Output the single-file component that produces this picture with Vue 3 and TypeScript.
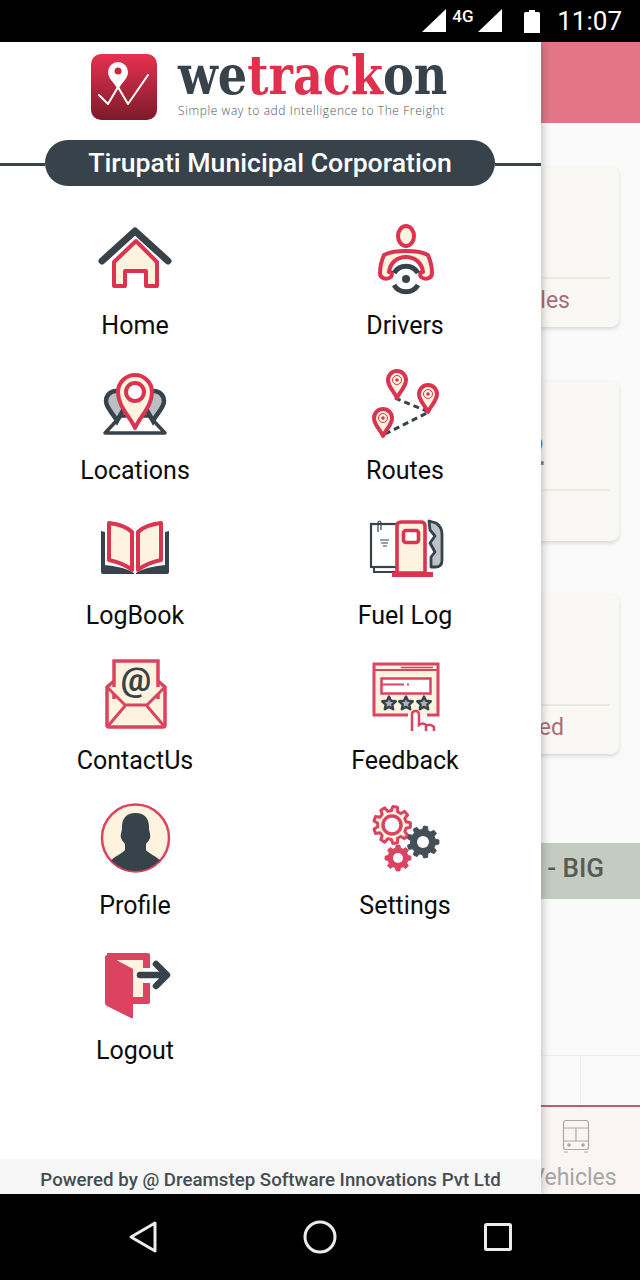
<script setup lang="ts">
const RED = '#da3450'
const ROSE = '#dc4360'
const DARK = '#37424a'
const CREAM = '#fdf3df'

// gear outline with evenly spaced trapezoid teeth
function gear(cx: number, cy: number, r: number, teeth: number): string {
  const root = r * 0.78
  const step = (Math.PI * 2) / teeth
  const pts: string[] = []
  for (let i = 0; i < teeth; i++) {
    const a = i * step
    const radii: [number, number][] = [
      [root, a - step * 0.32],
      [r, a - step * 0.18],
      [r, a + step * 0.18],
      [root, a + step * 0.32]
    ]
    for (const [rad, ang] of radii) {
      pts.push(`${(cx + rad * Math.cos(ang)).toFixed(1)} ${(cy + rad * Math.sin(ang)).toFixed(1)}`)
    }
  }
  return 'M' + pts.join('L') + 'Z'
}

const pin = 'M0 0C-3 -7 -9 -11 -9 -18A9 9 0 0 1 9 -18C9 -11 3 -7 0 0Z'
const routePins = [
  { x: 32, y: 33 },
  { x: 63, y: 47 },
  { x: 18, y: 71 }
]
</script>

<template>
  <div class="phone">
    <header class="status">
      <svg class="signal" width="24" height="23" viewBox="0 0 24 23"><path d="M24 0V23H0Z" fill="#fff" /></svg>
      <span class="net">4G</span>
      <svg class="signal" width="24" height="23" viewBox="0 0 24 23"><path d="M24 0V23H0Z" fill="#fff" /></svg>
      <svg class="battery" width="16" height="23" viewBox="0 0 16 23"><path d="M5 0H11V2H14.500Q16 2 16 3.500V23H0V3.500Q0 2 1.500 2H5Z" fill="#fff" /></svg>
      <span class="clock">11:07</span>
    </header>

    <div class="main">
      <div class="page">
        <div class="appbar"></div>
        <div class="cards">
          <div class="card">
            <div class="card-body"></div>
            <div class="card-foot">Vehicles</div>
          </div>
          <div class="card">
            <div class="card-body value">2</div>
            <div class="card-foot"></div>
          </div>
          <div class="card">
            <div class="card-body"></div>
            <div class="card-foot short">Stopped</div>
          </div>
        </div>
        <div class="band">- BIG</div>
        <div class="spacer"></div>
        <div class="strip"><i></i></div>
        <div class="tabs">
          <div class="tab">
            <svg width="28" height="34" viewBox="0 0 28 34" fill="none" stroke="#a8a8a8" stroke-width="1.200">
              <rect x="1.500" y="1.500" width="25" height="29" rx="2.500" />
              <path d="M1.500 9H26.500M14 9V22M1.500 22H26.500M2 33H6M22 33H26" />
              <circle cx="7" cy="26" r="1.200" fill="#a8a8a8" />
              <circle cx="21" cy="26" r="1.200" fill="#a8a8a8" />
            </svg>
            <span>Vehicles</span>
          </div>
        </div>
      </div>

      <aside class="drawer">
        <div class="brand">
          <svg class="brand-mark" width="66" height="66" viewBox="0 0 66 66">
            <defs>
              <linearGradient id="mark" x1="0" y1="0" x2="0" y2="1">
                <stop offset="0" stop-color="#e7314f" />
                <stop offset="1" stop-color="#7c1b2b" />
              </linearGradient>
            </defs>
            <rect width="66" height="66" rx="10" fill="url(#mark)" />
            <path d="M27 36C24 29 17 25 17 18A10 10 0 0 1 37 18C37 25 30 29 27 36Z" fill="#fff" />
            <circle cx="27" cy="17" r="3.500" fill="#c9283f" />
            <path d="M8 41L17 50L27 33L37 50L57 21" fill="none" stroke="#fff" stroke-width="2" stroke-linecap="round" stroke-linejoin="round" />
          </svg>
          <div class="wordmark">
            <div class="word">we<em>track</em>on</div>
            <div class="tagline">Simple way to add Intelligence to The Freight</div>
          </div>
        </div>

        <div class="org">
          <span class="rule left"></span>
          <div class="pill">Tirupati Municipal Corporation</div>
          <span class="rule"></span>
        </div>

        <nav class="menu">
          <div class="item">
            <svg width="80" height="80" viewBox="0 0 80 80">
              <path d="M41 21L19 42V66H30V51H51V66H62V42Z" :fill="CREAM" :stroke="RED" stroke-width="4" stroke-linejoin="round" />
              <path d="M7 41L40 11L73 41" fill="none" :stroke="DARK" stroke-width="7" stroke-linecap="round" stroke-linejoin="round" />
            </svg>
            <span>Home</span>
          </div>

          <div class="item">
            <svg width="80" height="80" viewBox="0 0 80 80">
              <ellipse cx="41" cy="16" rx="8" ry="10" :fill="CREAM" :stroke="RED" stroke-width="4" />
              <path d="M41 31C31 31 24 32 19 35C16 42 15 48 15 53C15 59 22 60 26 57C28 54 26 51 24 52C25 43 32 37 41 37C50 37 57 43 58 52C56 51 54 54 56 57C60 60 67 59 67 53C67 48 66 42 63 35C58 32 51 31 41 31Z" :fill="CREAM" :stroke="RED" stroke-width="4" stroke-linejoin="round" />
              <path d="M29 53A14 14 0 0 1 53 53M29 65A14 14 0 0 0 53 65" fill="none" :stroke="DARK" stroke-width="5" />
              <circle cx="41" cy="59" r="4" :fill="DARK" />
            </svg>
            <span>Drivers</span>
          </div>

          <div class="item">
            <svg width="80" height="80" viewBox="0 0 80 80">
              <path d="M26 51H54L70 68H10Z" fill="none" :stroke="DARK" stroke-width="3.500" stroke-linejoin="round" />
              <g :stroke="DARK" stroke-width="4.500" fill="#b8c0c4">
                <path d="M22 56C18 48 11 43 11 36A10 10 0 0 1 31 36C31 43 26 48 22 56Z" />
                <path d="M58 56C54 48 49 43 49 36A10 10 0 0 1 69 36C69 43 62 48 58 56Z" />
              </g>
              <path d="M40 63C35 51 23 42 23 27A17 17 0 0 1 57 27C57 42 45 51 40 63Z" :fill="CREAM" :stroke="RED" stroke-width="4" stroke-linejoin="round" />
              <circle cx="40" cy="27" r="9" fill="#fff" :stroke="RED" stroke-width="4" />
            </svg>
            <span>Locations</span>
          </div>

          <div class="item">
            <svg width="80" height="80" viewBox="0 0 80 80">
              <path d="M30 33L64 47L18 70" fill="none" :stroke="DARK" stroke-width="3" stroke-dasharray="6 4" />
              <g v-for="p in routePins" :key="p.x" :transform="`translate(${p.x} ${p.y})`">
                <path :d="pin" :fill="CREAM" :stroke="RED" stroke-width="4" stroke-linejoin="round" />
                <circle cy="-18" r="1.800" :fill="RED" />
                <circle cy="-18" r="4.500" fill="none" :stroke="RED" stroke-width="1" />
              </g>
            </svg>
            <span>Routes</span>
          </div>

          <div class="item">
            <svg width="80" height="80" viewBox="0 0 80 80">
              <path d="M6 21L10 22V55C20 56 31 58 39 63V64H8Q6 64 6 62Z" :fill="DARK" />
              <path d="M74 21L70 22V55C60 56 49 58 41 63V64H72Q74 64 74 62Z" :fill="DARK" />
              <path d="M14 13C23 14 32 17 37 22V60C31 55 23 52 14 50Z" :fill="CREAM" :stroke="RED" stroke-width="4" stroke-linejoin="round" />
              <path d="M66 13C57 14 48 17 43 22V60C49 55 57 52 66 50Z" :fill="CREAM" :stroke="RED" stroke-width="4" stroke-linejoin="round" />
            </svg>
            <span>LogBook</span>
          </div>

          <div class="item">
            <svg width="80" height="80" viewBox="0 0 80 80">
              <path d="M9 58V62H32" fill="none" :stroke="DARK" stroke-width="2" />
              <rect x="6" y="14" width="30" height="43" fill="#fff" :stroke="DARK" stroke-width="2.200" />
              <path d="M13 22V13Q13 11 14.500 11Q16 11 16 13V20" fill="none" :stroke="DARK" stroke-width="1.200" />
              <path d="M15 30H24M16 33H23M18 36H22" :stroke="DARK" stroke-width="1.200" />
              <path d="M64 11L71 13Q77 17 77 24V50Q77 57 71 57H66L66 47L70 42L65 33L70 26L65 20Z" fill="#bcc2c6" :stroke="DARK" stroke-width="2.800" stroke-linejoin="round" />
              <path d="M32 63V16Q32 12 36 12H56Q60 12 60 16V63Z" :fill="CREAM" :stroke="RED" stroke-width="3.600" />
              <rect x="38.500" y="20.500" width="15" height="12" rx="2.500" fill="#fff" :stroke="RED" stroke-width="3.600" />
              <rect x="27" y="62" width="41" height="5" :fill="RED" />
            </svg>
            <span>Fuel Log</span>
          </div>

          <div class="item">
            <svg width="80" height="80" viewBox="0 0 80 80">
              <path d="M19 26L12 32V70Q12 72 14 72H68Q70 72 70 70V32L63 26Z" :fill="CREAM" :stroke="ROSE" stroke-width="3.500" stroke-linejoin="round" />
              <path d="M19 44V6H63V44" :fill="CREAM" :stroke="ROSE" stroke-width="3.500" />
              <path d="M12 32L30 50H52L70 32M13 71L30 51M69 71L52 51" :fill="CREAM" :stroke="ROSE" stroke-width="3" stroke-linejoin="round" />
              <text class="at" x="41" y="36" text-anchor="middle" :fill="DARK">@</text>
            </svg>
            <span>ContactUs</span>
          </div>

          <div class="item">
            <svg width="80" height="80" viewBox="0 0 80 80">
              <path d="M43 60H9V9H73V60H62" :fill="CREAM" :stroke="ROSE" stroke-width="3" />
              <path d="M9 15H73" :stroke="ROSE" stroke-width="2" />
              <path d="M36 12.500H68" :stroke="ROSE" stroke-width="1.600" />
              <rect x="16.500" y="23.500" width="49" height="15" fill="#fff" :stroke="ROSE" stroke-width="2.500" />
              <path d="M17 29.500H39M42 29.500H44" :stroke="ROSE" stroke-width="2" />
              <g v-for="sx in [24, 41, 59]" :key="sx" :transform="`translate(${sx} 48)`">
                <path d="M0 -6.500L2 -2.200L6.800 -1.700L3.300 1.600L4.200 6.200L0 3.900L-4.200 6.200L-3.300 1.600L-6.800 -1.700L-2 -2.200Z" fill="#aab3ba" :stroke="DARK" stroke-width="2.400" stroke-linejoin="round" />
              </g>
              <path d="M47 76V60Q47 56 50.500 56Q54 56 54 60V70Q58 67 61 70V76M61 71Q65 68 69 72V76" fill="#fff" :stroke="ROSE" stroke-width="2.500" />
            </svg>
            <span>Feedback</span>
          </div>

          <div class="item">
            <svg width="80" height="80" viewBox="0 0 80 80">
              <defs>
                <clipPath id="face"><circle cx="40.500" cy="38" r="33" /></clipPath>
              </defs>
              <circle cx="40.500" cy="38" r="33.500" :fill="CREAM" :stroke="ROSE" stroke-width="2.500" />
              <path clip-path="url(#face)" d="M40.500 13C31 13 27 19 27 27C27 33 25 34 26 38C27 41 29 42 30 44V50C28 53 20 56 14 62V76H67V62C61 56 53 53 51 50V44C52 42 54 41 55 38C56 34 54 33 54 27C54 19 50 13 40.500 13Z" :fill="DARK" />
            </svg>
            <span>Profile</span>
          </div>

          <div class="item">
            <svg width="80" height="80" viewBox="0 0 80 80">
              <path :d="gear(27, 25, 18.500, 9)" :fill="CREAM" :stroke="ROSE" stroke-width="3" stroke-linejoin="round" />
              <circle cx="27" cy="25" r="9" fill="#fff" :stroke="ROSE" stroke-width="3.500" />
              <path :d="gear(58, 42, 16, 9)" fill="#454f57" stroke="#454f57" stroke-width="1" />
              <circle cx="58" cy="42" r="6" fill="#fff" />
              <path :d="gear(33, 58, 13, 8)" :fill="ROSE" :stroke="ROSE" stroke-width="1" />
              <circle cx="33" cy="58" r="5" fill="#fff" />
            </svg>
            <span>Settings</span>
          </div>

          <div class="item">
            <svg width="80" height="80" viewBox="0 0 80 80">
              <path d="M12 8H53Q55 8 55 10V23H48V15H22V52H48V38H55V57Q55 59 53 59H12Z" :fill="ROSE" />
              <rect x="22" y="15" width="26" height="37" :fill="CREAM" />
              <path d="M10 12Q10 10 12 10L38 24V72Q38 74 36 73L12 61Q10 60 10 58Z" :fill="ROSE" />
              <path d="M45 30H71M61 19L72 30L61 41" fill="none" :stroke="DARK" stroke-width="6.500" stroke-linecap="round" stroke-linejoin="round" />
            </svg>
            <span>Logout</span>
          </div>
        </nav>

        <footer class="powered">Powered by @ Dreamstep Software Innovations Pvt Ltd</footer>
      </aside>
    </div>

    <div class="navbar">
      <svg width="30" height="34" viewBox="0 0 30 34"><path d="M27 3L3 17L27 31Z" fill="none" stroke="#ececec" stroke-width="3" stroke-linejoin="round" /></svg>
      <svg width="34" height="34" viewBox="0 0 34 34"><circle cx="17" cy="17" r="15" fill="none" stroke="#ececec" stroke-width="3" /></svg>
      <svg width="30" height="30" viewBox="0 0 30 30"><rect x="2.500" y="2.500" width="25" height="25" rx="1" fill="none" stroke="#ececec" stroke-width="3" /></svg>
    </div>
  </div>
</template>

<style scoped>
.phone { width: 640px; height: 1280px; display: flex; flex-direction: column; overflow: hidden; font-family: Roboto, "Liberation Sans", sans-serif; background: #000; }

.status { height: 42px; display: flex; align-items: center; justify-content: flex-end; background: #000; color: #fff; padding-right: 18px; }
.signal { margin-top: -1px; }
.net { font-size: 17px; font-weight: 500; line-height: 20px; margin: -11px 3px 0 6px; width: 23px; }
.battery { margin-left: 22px; }
.clock { font-size: 26px; margin-left: 17px; }

.main { position: relative; flex: 1; min-height: 0; }

.page { height: 100%; display: flex; flex-direction: column; background: #fafafa; }
.appbar { height: 81px; background: #e27688; }
.cards { display: flex; flex-direction: column; gap: 53.500px; padding: 44px 21px 0 340px; }
.card { height: 160px; display: flex; flex-direction: column; background: #faf8f4; border-radius: 8px; box-shadow: 0 2px 4px rgba(0,0,0,.14); }
.card-body { height: 110px; border-bottom: 2px solid #ebe9e4; margin: 0 9px; }
.value { text-align: right; padding: 47px 65px 0 0; box-sizing: border-box; font-size: 40px; line-height: 48px; font-weight: 500; color: #5f8dac; }
.card-foot { flex: 1; text-align: right; padding: 8px 49px 0 0; font-size: 23px; line-height: 28px; color: #ab6c7a; }
.short { padding-right: 55px; }
.band { height: 56px; margin-top: 89px; background: #c3ccc0; color: #565b55; font-size: 26px; font-weight: 500; line-height: 50px; text-align: right; padding-right: 36px; }
.spacer { flex: 1; }
.strip { height: 50px; border-top: 1px solid #eee; box-sizing: border-box; }
.strip i { display: block; height: 100%; width: 1px; margin-left: 580px; background: #eee; }
.tabs { height: 89px; box-sizing: border-box; border-top: 2px solid #ba6171; background: #faf5f2; display: grid; grid-template-columns: repeat(5, 128px); }
.tab { grid-column: 5; display: flex; flex-direction: column; align-items: center; padding-top: 12px; color: #a6a6a6; font-size: 23px; }
.tab span { line-height: 28px; margin-top: 11px; margin-left: -5px; }

.drawer { position: absolute; left: 0; top: 0; bottom: 0; width: 541px; display: flex; flex-direction: column; background: #fff; box-shadow: 0 0 10px rgba(0,0,0,.3); }

.brand { height: 98px; box-sizing: border-box; display: flex; align-items: flex-start; padding: 12px 0 0 91px; gap: 21px; }
.brand-mark { flex: none; }
.wordmark { width: 270px; margin-top: -7px; }
.word { font-family: "DejaVu Serif Condensed", "DejaVu Serif", serif; font-weight: 700; font-size: 55px; line-height: 56px; color: #37424a; white-space: nowrap; transform: scaleX(.934); transform-origin: left center; }
.word em { font-style: normal; color: #e0304d; }
.tagline { font-family: "Open Sans", sans-serif; font-weight: 300; font-size: 12px; line-height: 15px; color: #555; white-space: nowrap; letter-spacing: .6px; }

.org { display: flex; align-items: center; }
.rule { flex: 1; height: 3px; margin-top: 3px; background: #37424a; }
.rule.left { flex: none; width: 45px; }
.pill { width: 450px; height: 46px; border-radius: 23px; background: #37424a; color: #fff; font-size: 26.700px; font-weight: 500; line-height: 46px; text-align: center; white-space: nowrap; }

.menu { display: grid; grid-template-columns: 270px 270px; grid-auto-rows: 145px; margin-top: 34px; }
.item { display: flex; flex-direction: column; align-items: center; }
.item span { font-size: 25px; line-height: 28px; margin-top: 12px; color: #0c0c0c; }
.at { font-family: Roboto, sans-serif; font-size: 34px; font-weight: 700; }

.powered { margin-top: auto; height: 35px; background: #f6f6f6; color: #454d52; font-size: 18.700px; font-weight: 500; line-height: 42px; text-align: center; overflow: hidden; white-space: nowrap; }

.navbar { height: 86px; display: flex; align-items: center; background: #000; padding-left: 128px; }
.navbar svg:nth-child(1) { margin-right: 145px; }
.navbar svg:nth-child(2) { margin-right: 146px; }
</style>
